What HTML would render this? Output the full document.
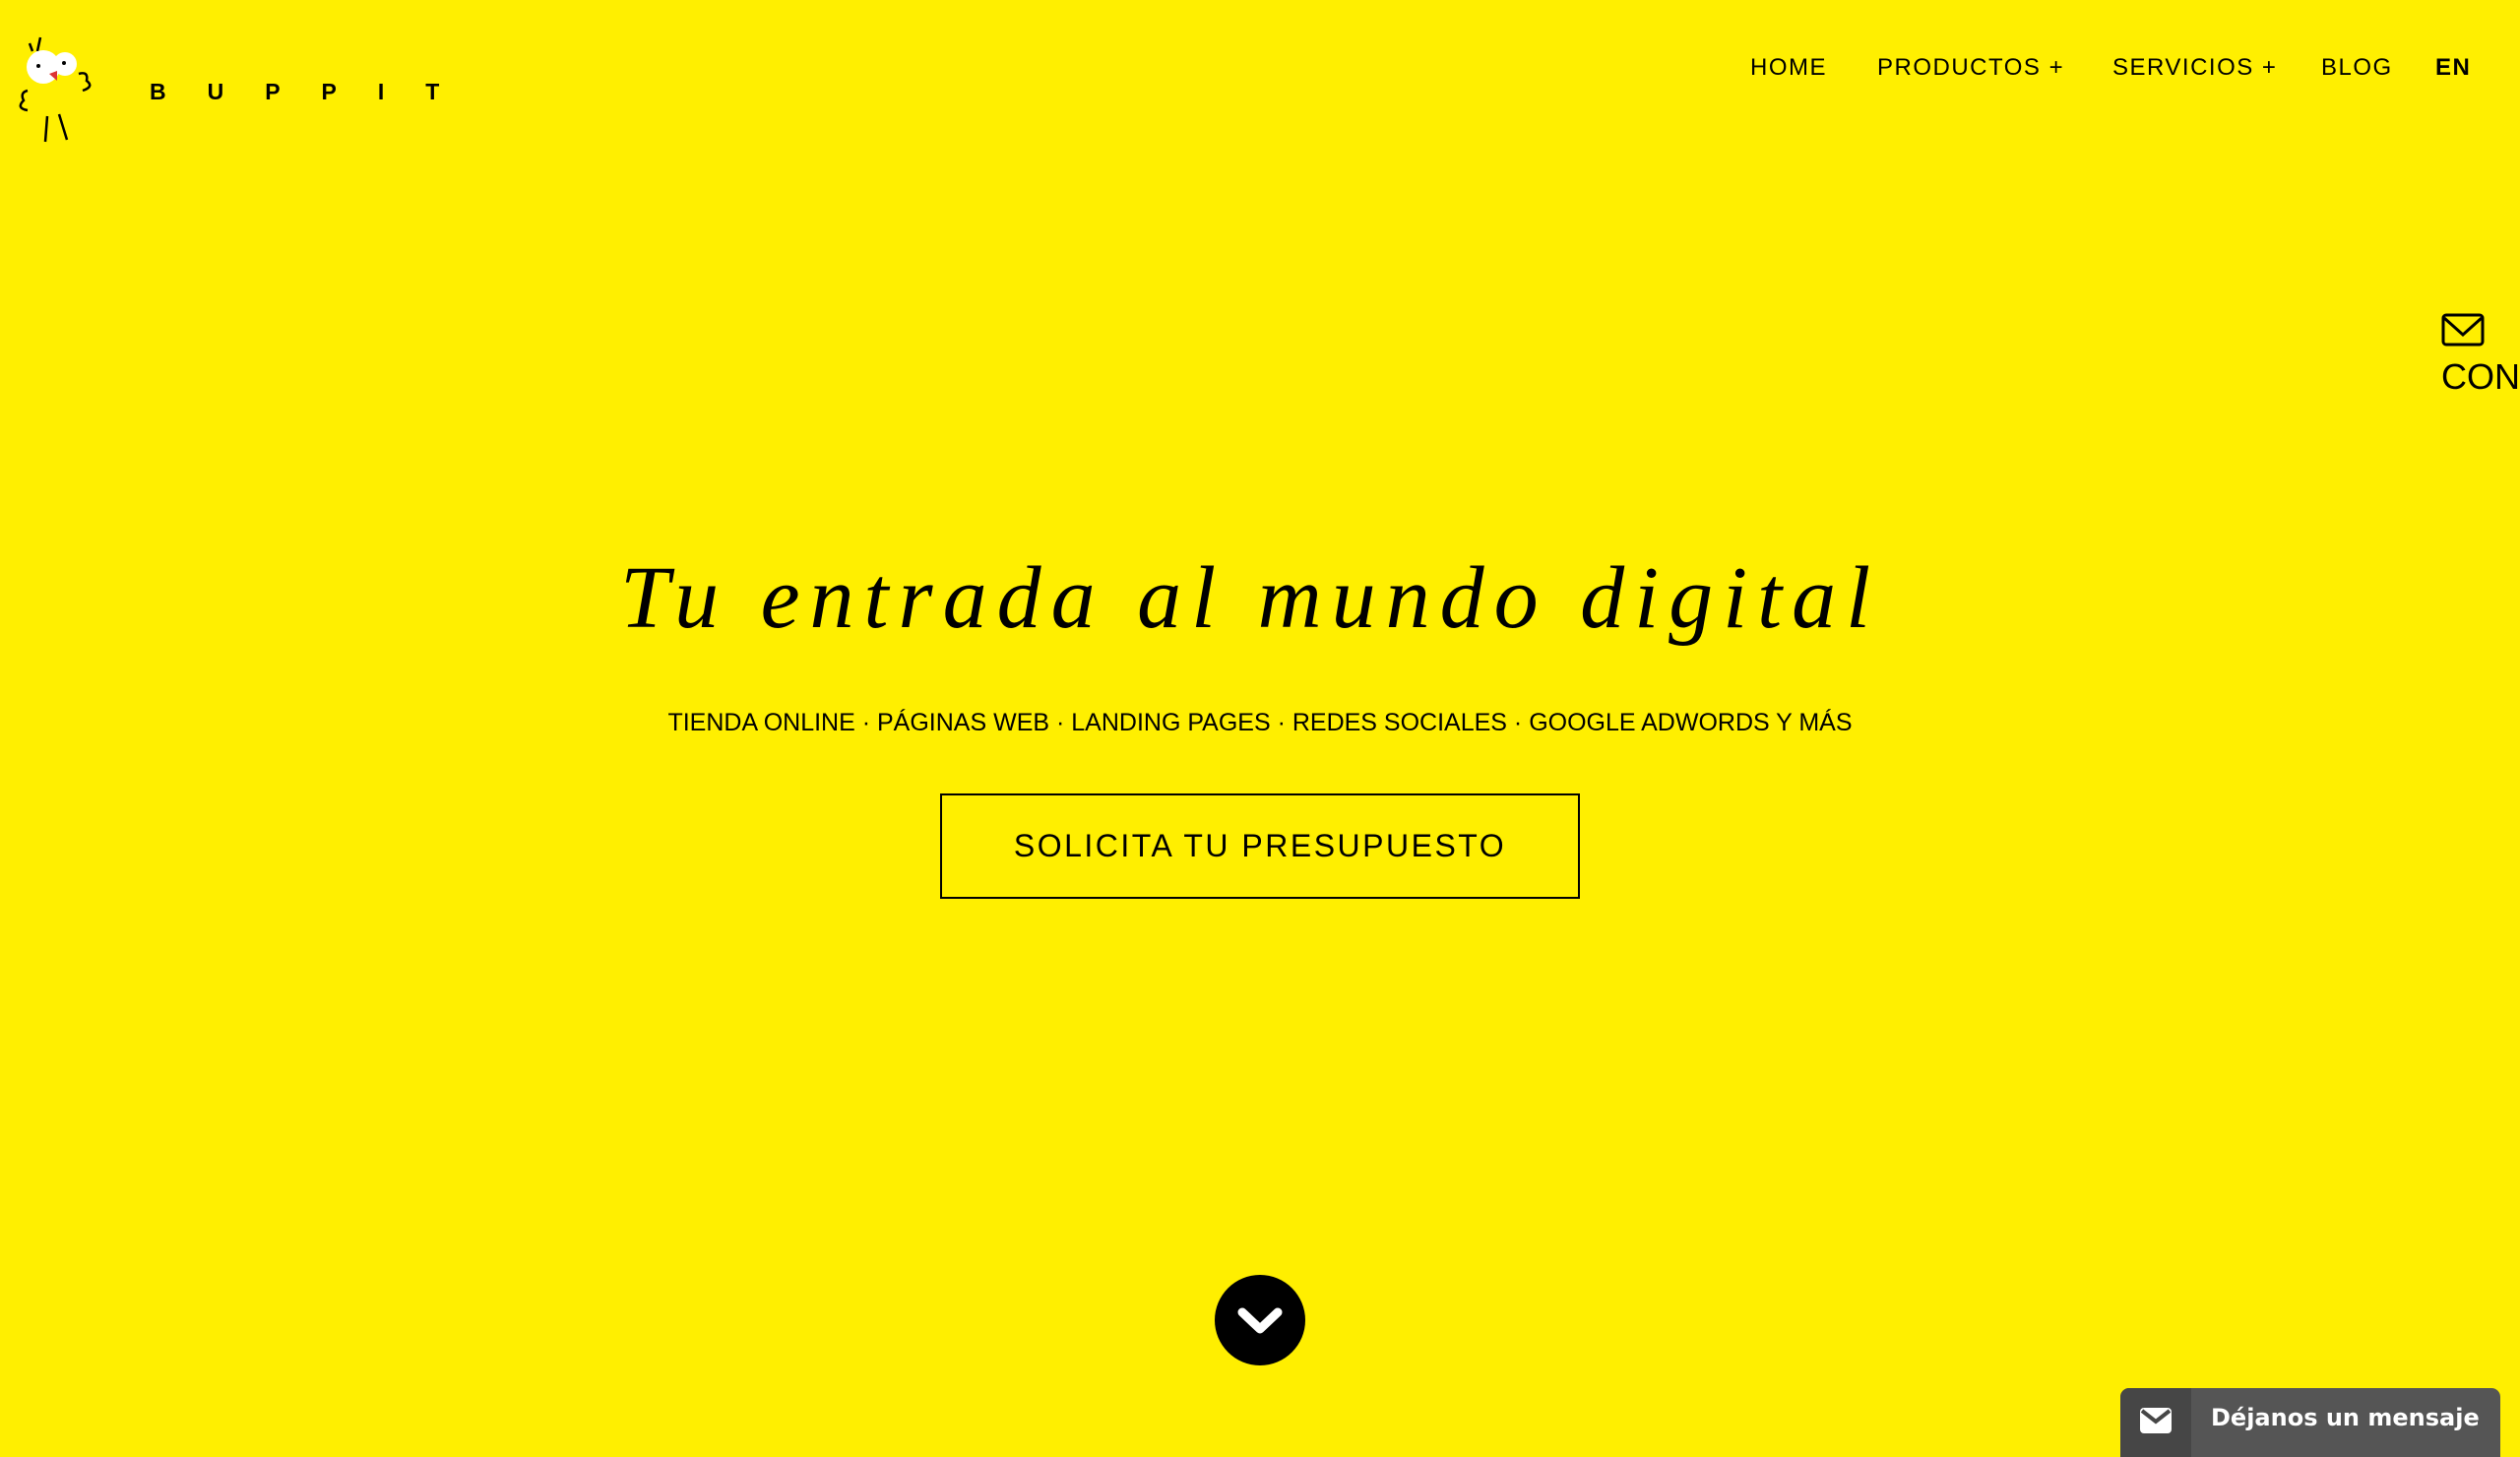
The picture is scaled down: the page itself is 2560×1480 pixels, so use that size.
<!DOCTYPE html>
<html><head><meta charset="utf-8"><style>
*{margin:0;padding:0;box-sizing:border-box}
html,body{width:2560px;height:1468px;overflow:hidden;background:#FFEF00;font-family:"Liberation Sans",sans-serif;color:#000}
.abs{position:absolute;white-space:nowrap}
.nav{top:55px;font-size:24px;letter-spacing:1.5px}
</style></head><body>
<svg class="abs" style="left:14px;top:30px" width="90" height="120" viewBox="0 0 90 120">
<path d="M16 14 L19 22 M27 8 L24 22" stroke="#000" stroke-width="2.5" fill="none"/>
<circle cx="30" cy="38" r="17" fill="#fff"/><circle cx="52" cy="35" r="12" fill="#fff"/>
<circle cx="25" cy="37" r="2" fill="#000"/><circle cx="51" cy="34" r="2" fill="#000"/>
<path d="M36 45 L44 42 L44 52Z" fill="#d33"/>
<path d="M66 45 Q76 42 74 52 Q82 58 70 62" stroke="#000" stroke-width="2.5" fill="none"/>
<path d="M14 62 Q6 64 10 72 Q2 80 14 82" stroke="#000" stroke-width="2.5" fill="none"/>
<path d="M34 88 L32 114 M46 86 L54 112" stroke="#000" stroke-width="2.5" fill="none"/>
</svg>
<div class="abs" style="left:152px;top:80px;font-size:23px;font-weight:bold;letter-spacing:42px">BUPPIT</div>
<div class="abs nav" style="left:1778px">HOME</div>
<div class="abs nav" style="left:1907px">PRODUCTOS +</div>
<div class="abs nav" style="left:2146px">SERVICIOS +</div>
<div class="abs nav" style="left:2358px">BLOG</div>
<div class="abs nav" style="left:2474px;font-weight:bold">EN</div>
<svg class="abs" style="left:2480px;top:318px" width="44" height="34" viewBox="0 0 44 34"><rect x="2" y="2" width="40" height="30" rx="3" fill="none" stroke="#000" stroke-width="3"/><path d="M3 5 L22 22 L41 5" fill="none" stroke="#000" stroke-width="3"/></svg>
<div class="abs" style="left:2480px;top:362px;font-size:36px">CON</div>
<div class="abs" style="left:630px;top:556px;width:1270px;text-align:center;font-family:'Liberation Serif',serif;font-style:italic;font-size:90px;letter-spacing:10px">Tu entrada al mundo digital</div>
<div class="abs" style="left:640px;top:720px;width:1280px;text-align:center;font-size:25px">TIENDA ONLINE · PÁGINAS WEB · LANDING PAGES · REDES SOCIALES · GOOGLE ADWORDS Y MÁS</div>
<div class="abs" style="left:955px;top:806px;width:650px;height:107px;border:2.5px solid #000;text-align:center;line-height:102px;font-size:32px;letter-spacing:2.5px">SOLICITA TU PRESUPUESTO</div>
<div class="abs" style="left:1234px;top:1295px;width:92px;height:92px;border-radius:50%;background:#000"></div>
<svg class="abs" style="left:1254px;top:1325px" width="52" height="34" viewBox="0 0 52 34"><path d="M8 8 L26 25 L44 8" stroke="#fff" stroke-width="9" fill="none" stroke-linecap="round" stroke-linejoin="round"/></svg>
<div class="abs" style="left:2154px;top:1410px;width:386px;height:70px;background:#555;border-radius:9px 9px 0 0;overflow:hidden">
<div style="position:absolute;left:0;top:0;width:72px;height:70px;background:#464646"></div>
<svg style="position:absolute;left:20px;top:20px" width="32" height="26" viewBox="0 0 32 26"><rect x="0" y="0" width="32" height="26" rx="4" fill="#fff"/><path d="M2 3 L16 14 L30 3" stroke="#464646" stroke-width="4" fill="none"/></svg>
<div style="position:absolute;left:92px;top:16px;color:#fff;font-family:'DejaVu Sans',sans-serif;font-weight:bold;font-size:24px">Déjanos un mensaje</div>
</div>
</body></html>
